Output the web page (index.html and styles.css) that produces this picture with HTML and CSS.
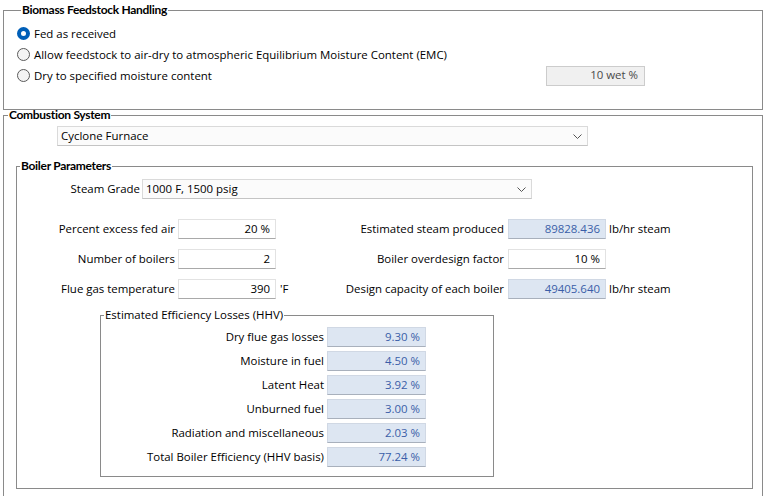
FILE: index.html
```html
<!DOCTYPE html>
<html>
<head>
<meta charset="utf-8">
<link rel="stylesheet" href="styles.css">
</head>
<body>
<div class="page">
  <fieldset class="group g-feed">
    <legend class="bold">Biomass Feedstock Handling</legend>
    <div class="radio-row"><span class="radio on"></span><span class="rtext">Fed as received</span></div>
    <div class="radio-row"><span class="radio"></span><span class="rtext">Allow feedstock to air-dry to atmospheric Equilibrium Moisture Content (EMC)</span></div>
    <div class="radio-row"><span class="radio"></span><span class="rtext">Dry to specified moisture content</span><span class="field disabled wet">10 wet %</span></div>
  </fieldset>

  <fieldset class="group g-comb">
    <legend class="bold">Combustion System</legend>
    <div class="select sel-furnace"><span class="stext">Cyclone Furnace</span><svg class="chev" width="9" height="5" viewBox="0 0 9 5"><polyline points="0.5,0.5 4.5,4.5 8.5,0.5" fill="none" stroke="#555" stroke-width="1"/></svg></div>

    <fieldset class="group g-boiler">
      <legend class="bold">Boiler Parameters</legend>
      <div class="steam-row">
        <span class="steam-lbl">Steam Grade</span>
        <div class="select sel-steam"><span class="stext">1000 F, 1500 psig</span><svg class="chev" width="9" height="5" viewBox="0 0 9 5"><polyline points="0.5,0.5 4.5,4.5 8.5,0.5" fill="none" stroke="#555" stroke-width="1"/></svg></div>
      </div>

      <div class="param-grid">
        <span class="lbl l1">Percent excess fed air</span>
        <span class="field">20 %</span>
        <span class="unit u1"></span>
        <span class="lbl l2">Estimated steam produced</span>
        <span class="field ro">89828.436</span>
        <span class="unit u2">lb/hr steam</span>

        <span class="lbl l1">Number of boilers</span>
        <span class="field">2</span>
        <span class="unit u1"></span>
        <span class="lbl l2">Boiler overdesign factor</span>
        <span class="field">10 %</span>
        <span class="unit u2"></span>

        <span class="lbl l1">Flue gas temperature</span>
        <span class="field">390</span>
        <span class="unit u1">'F</span>
        <span class="lbl l2">Design capacity of each boiler</span>
        <span class="field ro">49405.640</span>
        <span class="unit u2">lb/hr steam</span>
      </div>

      <fieldset class="group g-eff">
        <legend>Estimated Efficiency Losses (HHV)</legend>
        <div class="eff-grid">
          <span class="lbl">Dry flue gas losses</span><span class="field ro">9.30 %</span>
          <span class="lbl">Moisture in fuel</span><span class="field ro">4.50 %</span>
          <span class="lbl">Latent Heat</span><span class="field ro">3.92 %</span>
          <span class="lbl">Unburned fuel</span><span class="field ro">3.00 %</span>
          <span class="lbl">Radiation and miscellaneous</span><span class="field ro">2.03 %</span>
          <span class="lbl">Total Boiler Efficiency (HHV basis)</span><span class="field ro">77.24 %</span>
        </div>
      </fieldset>
    </fieldset>
  </fieldset>
</div>
</body>
</html>
```

FILE: styles.css
```css
html, body {
  margin: 0;
  padding: 0;
  background: #ffffff;
  overflow: hidden;
}
body {
  font-family: "Open Sans", "Noto Sans", sans-serif;
  font-size: 11.45px;
  color: #000;
}
.page {
  width: 772px;
  height: 496px;
  overflow: hidden;
}
.group {
  border: 1px solid #8a8a8a;
  margin: 0;
  padding: 0;
  min-width: 0;
  box-sizing: border-box;
}
.group > legend {
  padding: 0 1px;
  line-height: 10px;
  font-size: 11.45px;
  white-space: nowrap;
}
.group > legend.bold {
  font-family: Lato, "Open Sans", sans-serif;
  font-weight: 700;
  font-size: 12px;
  letter-spacing: -0.3px;
}

.g-feed {
  margin: 5px 0 0 3px;
  width: 760px;
  padding: 8px 0 23px 13px;
}
.g-feed > legend { margin-left: 4px; }

.radio-row {
  display: flex;
  align-items: center;
  height: 21px;
  gap: 4px;
}
.rtext { padding-bottom: 1px; }
.radio {
  width: 13px;
  height: 13px;
  box-sizing: border-box;
  border-radius: 50%;
  border: 1px solid #5a5a5a;
  background: #f4f4f4;
  flex: none;
}
.radio.on {
  border: 4px solid #005fb8;
  background: #ffffff;
}

.field {
  display: flex;
  align-items: center;
  justify-content: flex-end;
  height: 20px;
  box-sizing: border-box;
  padding: 0 5px 2px 0;
  background: #ffffff;
  border: 1px solid #e2e2e2;
  border-bottom-color: #a9a9a9;
  white-space: nowrap;
}
.field.ro {
  background: #dde6f2;
  color: #3a5ea8;
  border-color: #d0d8e4;
  border-bottom-color: #a8b0bc;
}
.field.disabled {
  background: #f0f0f0;
  color: #4a4a4a;
  border: 1px solid #cccccc;
  padding-right: 6px;
}
.wet {
  width: 99px;
  margin-left: auto;
  margin-right: 117px;
}

.g-comb {
  margin: 0 0 0 3px;
  width: 760px;
  padding: 0 0 30px 0;
}
.g-comb > legend { margin-left: 4px; }

.select {
  display: flex;
  align-items: center;
  justify-content: space-between;
  height: 20px;
  box-sizing: border-box;
  background: #fbfbfb;
  border: 1px solid #dadada;
  border-bottom-color: #c4c4c4;
  padding: 0 5px 0 3px;
}
.stext { padding-bottom: 2px; }
.sel-furnace {
  margin: 6px 0 0 53px;
  width: 531px;
}
.sel-steam { width: 390px; }
.chev { flex: none; }

.g-boiler {
  margin: 15px 9px 0 12px;
  padding: 0 0 11px 0;
}
.g-boiler > legend { margin-left: 3px; }

.steam-row {
  display: flex;
  align-items: center;
  margin-top: 8px;
  gap: 2px;
}
.steam-lbl {
  width: 123px;
  text-align: right;
  padding-bottom: 2px;
}

.param-grid {
  display: grid;
  grid-template-columns: 161px 98px 26px 206px 98px auto;
  grid-auto-rows: 20px;
  row-gap: 10px;
  margin-top: 20px;
  align-items: center;
}
.lbl {
  text-align: right;
  white-space: nowrap;
  padding-bottom: 2px;
}
.unit { padding-bottom: 2px; }
.l1 { padding-right: 3px; }
.l2 { padding-right: 4px; }
.u1 { padding-left: 4px; }
.u2 { padding-left: 3px; }

.g-eff {
  margin: 11px 0 0 83px;
  width: 394px;
  padding: 0 0 9px 0;
}
.g-eff > legend {
  margin-left: 3px;
  font-weight: 400;
}
.eff-grid {
  display: grid;
  grid-template-columns: 226px 99px;
  grid-auto-rows: 20px;
  row-gap: 4px;
  margin-top: 7px;
  align-items: center;
}
.eff-grid .lbl { padding-right: 3px; }
```
